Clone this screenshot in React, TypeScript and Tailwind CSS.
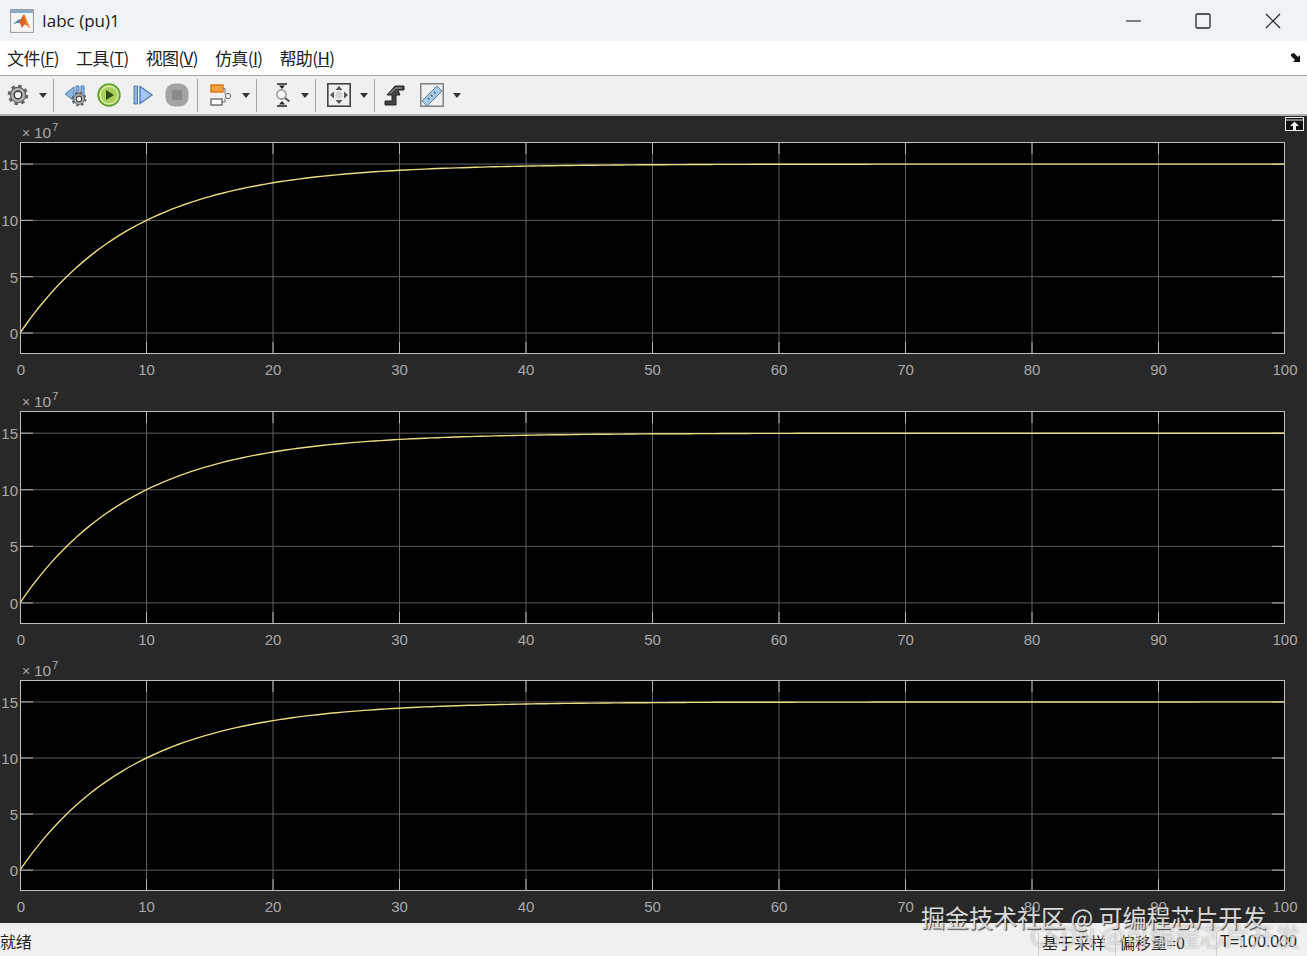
import React from 'react'

const XTICKS = [0, 10, 20, 30, 40, 50, 60, 70, 80, 90, 100]
const YTICKS = [15, 10, 5, 0]

const PLOTS = [
  { top: 26, height: 212 },
  { top: 26, height: 213 },
  { top: 26, height: 211 },
]

const MENUS = [
  { label: '文件', key: 'F' },
  { label: '工具', key: 'T' },
  { label: '视图', key: 'V' },
  { label: '仿真', key: 'I' },
  { label: '帮助', key: 'H' },
]

const LEFT = 20
const WIDTH = 1265
const CJK = "font-['Noto_Sans_CJK_SC','Noto_Sans',sans-serif]"

function Axes({ top, height }: { top: number; height: number }) {
  const bottom = top + height
  const zero = top + height * 0.901
  const unit = (height * 0.797) / 15
  const px = (t: number) => LEFT + (t / 100) * WIDTH
  const py = (v: number) => zero - v * unit

  // curva de primeira ordem, chega em 15e7
  const pts: string[] = []
  for (let t = 0; t <= 100; t += 0.5) {
    pts.push(`${px(t).toFixed(1)},${py(15 * (1 - Math.exp(-t / 9.1))).toFixed(1)}`)
  }

  return (
    <svg viewBox="0 0 1307 269" className="block w-full h-[269px] font-['Liberation_Sans',sans-serif]">
      <rect x={LEFT} y={top} width={WIDTH} height={height} fill="#000" />
      {XTICKS.slice(1, -1).map(t => (
        <g key={t}>
          <line x1={px(t)} x2={px(t)} y1={top} y2={bottom} stroke="#5f5f5f" />
          <line x1={px(t)} x2={px(t)} y1={top} y2={top + 12} stroke="#b5b5b5" />
          <line x1={px(t)} x2={px(t)} y1={bottom - 12} y2={bottom} stroke="#b5b5b5" />
        </g>
      ))}
      {YTICKS.map(v => (
        <g key={v}>
          <line x1={LEFT} x2={LEFT + WIDTH} y1={py(v)} y2={py(v)} stroke="#5f5f5f" />
          <line x1={LEFT} x2={LEFT + 13} y1={py(v)} y2={py(v)} stroke="#b5b5b5" />
          <line x1={LEFT + WIDTH - 13} x2={LEFT + WIDTH} y1={py(v)} y2={py(v)} stroke="#b5b5b5" />
        </g>
      ))}
      <polyline points={pts.join(' ')} fill="none" stroke="#e8dc84" strokeWidth="1.4" />
      <rect x={LEFT + 0.5} y={top + 0.5} width={WIDTH - 1} height={height - 1} fill="none" stroke="#bdbdbd" />

      {YTICKS.map(v => (
        <text key={v} x={18} y={py(v) + 6} textAnchor="end" fontSize="15" fill="#a8a8a8">{v}</text>
      ))}
      {XTICKS.map(t => (
        <text key={t} x={px(t) + (t === 0 ? 1 : 0)} y={bottom + 21} textAnchor="middle" fontSize="15" fill="#a8a8a8">{t}</text>
      ))}
      <text x={22} y={top - 4} fontSize="14" fill="#a8a8a8">×</text>
      <text x={34} y={top - 4} fontSize="15.5" fill="#a8a8a8">10</text>
      <text x={52} y={top - 11} fontSize="11.5" fill="#a8a8a8">7</text>
    </svg>
  )
}

function Caret({ className }: { className: string }) {
  return (
    <svg width="8" height="5" viewBox="0 0 8 5" className={className}>
      <path d="M0 0h8L4 5z" fill="#333" />
    </svg>
  )
}

function Sep({ className }: { className: string }) {
  return <div className={`w-px h-[33px] bg-[#a6a6a6] ${className}`} />
}

function GearIcon({ x = 12, y = 12, r = 1 }: { x?: number; y?: number; r?: number }) {
  return (
    <g transform={`translate(${x} ${y}) scale(${r})`}>
      <circle r="8.6" fill="none" stroke="#666" strokeWidth="3.4" strokeDasharray="3.4 3.35" />
      <circle r="7.6" fill="#b5b5b5" stroke="#5c5c5c" strokeWidth="1.2" />
      <circle r="3.9" fill="#f2f2f2" stroke="#444" strokeWidth="1.6" />
    </g>
  )
}

function Toolbar() {
  return (
    <div className="flex items-center h-[38px] bg-[#f0f0f0]">
      <svg width="24" height="24" viewBox="0 0 24 24" className="ml-[6px]"><GearIcon /></svg>
      <Caret className="ml-[9px]" />
      <Sep className="ml-[6px]" />
      {/* voltar um passo */}
      <svg width="24" height="24" viewBox="0 0 24 24" className="ml-[10px]">
        <path d="M1 11 10 4v14z" fill="#8fb4e0" stroke="#4f7fb8" />
        <path d="M12 3h3v12h-3zM17 3h3v10h-3z" fill="#8fb4e0" stroke="#4f7fb8" />
        <GearIcon x={15} y={16} r={0.72} />
      </svg>
      <svg width="24" height="24" viewBox="0 0 24 24" className="ml-[9px]">
        <circle cx="12" cy="12" r="10.8" fill="#d6e8a0" stroke="#62a02c" strokeWidth="1.8" />
        <circle cx="12" cy="12" r="8" fill="#a9d05a" />
        <path d="M9 7v10l8-5z" fill="#2f4a17" />
      </svg>
      <svg width="24" height="24" viewBox="0 0 24 24" className="ml-[10px]">
        <path d="M3 3h3.5v18H3z" fill="#8fb4e0" stroke="#4f7fb8" />
        <path d="M9 3.5 21 12 9 20.5z" fill="#a9c8ec" stroke="#4f7fb8" strokeWidth="1.4" />
      </svg>
      <svg width="24" height="24" viewBox="0 0 24 24" className="ml-[10px]">
        <rect x="0.5" y="0.5" width="23" height="23" rx="9" fill="#a3a3a3" />
        <rect x="7" y="7" width="10" height="10" fill="#8a8a8a" />
      </svg>
      <Sep className="ml-[8px]" />
      {/* navegador de blocos */}
      <svg width="24" height="24" viewBox="0 0 24 24" className="ml-[10px]">
        <rect x="3" y="2" width="12" height="7" fill="#f0a040" stroke="#d97a10" strokeWidth="1.4" />
        <rect x="3" y="16" width="11" height="6" fill="#fff" stroke="#555" strokeWidth="1.2" />
        <circle cx="20" cy="13" r="2.6" fill="#eee" stroke="#666" />
        <path d="M15 5.5h2V11M14 19h3v-4" fill="none" stroke="#777" />
      </svg>
      <Caret className="ml-[10px]" />
      <Sep className="ml-[6px]" />
      {/* zoom eixo y */}
      <svg width="24" height="24" viewBox="0 0 24 24" className="ml-[13px]">
        <path d="M7 1h10M7 23h10" stroke="#222" strokeWidth="1.4" />
        <path d="M12 6 9 2.5h6zM12 18l-3 3.5h6z" fill="#222" />
        <circle cx="11.5" cy="11.5" r="4.6" fill="#f4f4f4" stroke="#9a9a9a" strokeWidth="1.6" />
        <path d="m15 15 4.5 3.5" stroke="#555" strokeWidth="2" />
      </svg>
      <Caret className="ml-[7px]" />
      <Sep className="ml-[6px]" />
      {/* ajustar aos dados */}
      <svg width="24" height="24" viewBox="0 0 24 24" className="ml-[11px]">
        <rect x="0.8" y="0.8" width="22.4" height="22.4" fill="#efefef" stroke="#444" strokeWidth="1.6" />
        <path d="M12 3l3.5 4h-7zM12 21l3.5-4h-7zM3 12l4-3.5v7zM21 12l-4-3.5v7z" fill="#555" />
        <circle cx="12" cy="12" r="3.6" fill="#d4d4d4" />
      </svg>
      <Caret className="ml-[9px]" />
      <Sep className="ml-[6px]" />
      <svg width="24" height="24" viewBox="0 0 24 24" className="ml-[8px]">
        <path d="M2 22v-4h7v-6H4l8-9h9v4h-6l2 5h-4v10z" fill="#444" stroke="#222" />
        <path d="M7 10.5 12.5 5h6" fill="none" stroke="#aaa" />
      </svg>
      <svg width="24" height="24" viewBox="0 0 24 24" className="ml-[13px]">
        <rect x="0.8" y="0.8" width="22.4" height="22.4" fill="#f2f2f2" stroke="#777" strokeWidth="1.4" />
        <path d="M2 18 17 3l5 5L7 23z" fill="#a5cbe4" stroke="#5b7f99" />
        <path d="m8 15 1.5 1.5M11 12l1.5 1.5M14 9l1.5 1.5" stroke="#46657c" strokeWidth="1.4" />
      </svg>
      <Caret className="ml-[9px]" />
    </div>
  )
}

export default function App() {
  return (
    <div className="relative w-[1307px] h-[956px] overflow-hidden flex flex-col bg-[#282828]">
      {/* barra de título */}
      <div className="flex items-center h-[41px] bg-[#eff3f8] text-[#1a1a1a]">
        <svg width="24" height="24" viewBox="0 0 24 24" className="ml-[10px]">
          <rect x="0.6" y="0.6" width="22.8" height="22.8" fill="#f5f5f5" stroke="#9b9b9b" />
          <rect x="1" y="1" width="22" height="3" fill="#8aa9c9" />
          <path d="M3 15 9.5 10 12 13z" fill="#3f7fb5" />
          <path d="M9 12.5 14 5c2 3 4 9 6 14-2-1-4-4-5.5-3.5L12 19z" fill="#d9622b" />
          <path d="M14 5c2 3 4 9 6 14-2-1-3-3-4-5z" fill="#f0a030" />
        </svg>
        <span className="ml-[8px] text-[17px] font-['Open_Sans',sans-serif]">Iabc (pu)1</span>
        <div className="ml-auto flex items-center">
          <svg width="16" height="16" viewBox="0 0 16 16">
            <path d="M0 8h15" stroke="#222" strokeWidth="1.1" />
          </svg>
          <svg width="16" height="16" viewBox="0 0 16 16" className="ml-[53px]">
            <rect x="1" y="1" width="14" height="14" rx="1.5" fill="none" stroke="#222" strokeWidth="1.3" />
          </svg>
          <svg width="16" height="16" viewBox="0 0 16 16" className="ml-[54px] mr-[26px]">
            <path d="M1 1l14 14M15 1 1 15" stroke="#222" strokeWidth="1.2" />
          </svg>
        </div>
      </div>

      {/* menu */}
      <div className={`flex items-center h-[35px] bg-white border-b border-b-[#a8a8a8] pl-[7px] gap-[17px] text-[17px] text-[#222] ${CJK}`}>
        {MENUS.map(m => (
          <span key={m.key} className="tracking-[-0.6px]">
            {m.label}(<span className="underline">{m.key}</span>)
          </span>
        ))}
        <svg width="12" height="10" viewBox="0 0 12 10" className="ml-auto mr-[5px]">
          <path d="M1 1l3-1 4 4 2-2v7H3l2-2-4-4z" fill="#111" />
        </svg>
      </div>

      <Toolbar />

      {/* área dos gráficos */}
      <div className="relative flex-1 border-t-2 border-t-[#b4b4b4]">
        {PLOTS.map((p, i) => (
          <Axes key={i} top={p.top} height={p.height} />
        ))}
        <svg width="19" height="14" viewBox="0 0 19 14" className="absolute right-[3px] top-[1px]">
          <rect x="0.5" y="0.5" width="18" height="13" fill="#111" stroke="#eee" />
          <path d="M1 3h17" stroke="#eee" />
          <path d="M9.5 4.5 14 9h-3v4H8V9H5z" fill="#eee" />
        </svg>
      </div>

      {/* barra de status */}
      <div className={`flex h-[33px] shrink-0 bg-[#f0f0f0] text-[16px] leading-[36px] text-[#222] ${CJK}`}>
        <span className="tracking-[-0.2px]">就绪</span>
        <div className="ml-auto flex self-end h-[24px] leading-[20px]">
          <span className="w-[77px] pl-[3px] border-l border-l-[#cfcfcf]">基于采样</span>
          <span className="w-[101px] pl-[3px] border-l border-l-[#cfcfcf]">偏移量=0</span>
          <span className="w-[91px] pl-[3px] border-l border-l-[#cfcfcf] font-['Liberation_Sans',sans-serif]">T=100.000</span>
        </div>
      </div>

      {/* marcas d'água */}
      <span className={`absolute left-[1030px] top-[917px] text-[25px] whitespace-nowrap text-white/60 [text-shadow:0_0_2px_rgba(90,90,90,0.55)] ${CJK}`}>
        CSDN @可编程芯片开发
      </span>
      <span className={`absolute left-[921px] top-[899px] text-[24px] whitespace-nowrap text-[#d8d8d8] [text-shadow:1px_1px_1px_rgba(40,40,40,0.9)] ${CJK}`}>
        掘金技术社区 @ 可编程芯片开发
      </span>
    </div>
  )
}
